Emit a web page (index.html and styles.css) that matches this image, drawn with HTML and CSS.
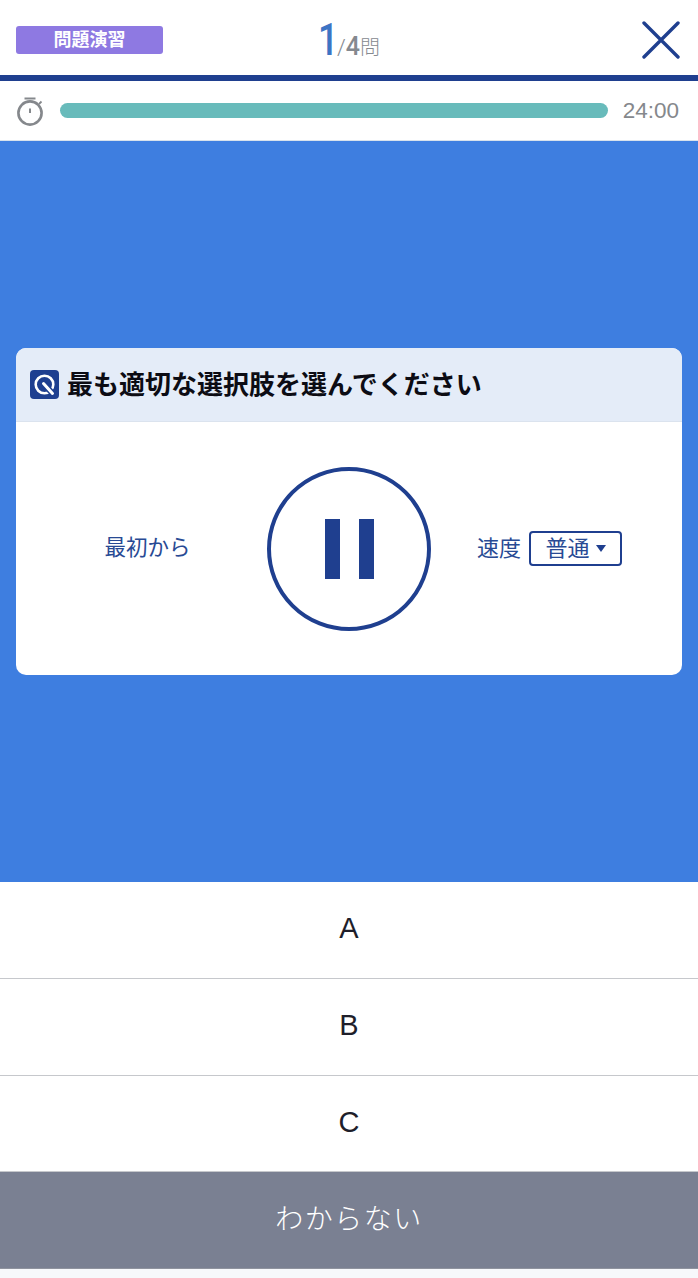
FILE: index.html
```html
<!DOCTYPE html>
<html lang="ja">
<head>
<meta charset="utf-8">
<title>問題演習</title>
<link rel="stylesheet" href="styles.css">
</head>
<body>
<div class="page">
  <header class="top">
    <span class="badge">問題演習</span>
    <div class="count"><span class="count-now">1</span><span class="count-slash">/</span><span class="count-total">4</span><span class="count-unit">問</span></div>
    <button class="close" aria-label="閉じる">
      <svg width="38" height="38" viewBox="0 0 38 38"><path d="M2 2 L36 36 M36 2 L2 36" stroke="#1f3f8f" stroke-width="3.4" stroke-linecap="round" fill="none"/></svg>
    </button>
  </header>
  <div class="timer">
    <svg class="watch" width="28" height="30" viewBox="0 0 28 30"><g fill="none" stroke="#85888c"><circle cx="14" cy="17" r="11.6" stroke-width="2.6"/><path d="M8.5 2.5 H19.5" stroke-width="2"/><path d="M23 8 L25.5 5.5" stroke-width="1.8"/><path d="M14 12.5 V17" stroke-width="2"/></g></svg>
    <div class="bar"></div>
    <span class="time">24:00</span>
  </div>
  <main class="stage">
    <section class="card">
      <div class="card-head">
        <svg class="q-icon" width="29" height="29" viewBox="0 0 29 29"><rect width="29" height="29" rx="4" fill="#1e3f90"/><circle cx="14.5" cy="14.5" r="8.8" fill="none" stroke="#fff" stroke-width="2.6"/><path d="M13 13 L23 24" stroke="#1e3f90" stroke-width="6"/><path d="M13.5 13.5 L22.5 23.5" stroke="#fff" stroke-width="3" stroke-linecap="round"/></svg>
        <h1 class="card-title">最も適切な選択肢を選んでください</h1>
      </div>
      <div class="controls">
        <span class="restart">最初から</span>
        <button class="pause" aria-label="一時停止"><span class="pause-bar"></span><span class="pause-bar"></span></button>
        <div class="speed">
          <span class="speed-label">速度</span>
          <span class="select"><span class="select-text">普通</span><i class="caret"></i></span>
        </div>
      </div>
    </section>
  </main>
  <div class="choices">
    <div class="choice">A</div>
    <div class="choice">B</div>
    <div class="choice">C</div>
  </div>
  <div class="unknown">わからない</div>
  <div class="foot"></div>
</div>
</body>
</html>
```
FILE: styles.css
```css
* { box-sizing: border-box; }
html, body { margin: 0; padding: 0; }
body { font-family: "Liberation Sans", "Noto Sans CJK JP", sans-serif; background: #fff; }
.page { width: 698px; height: 1278px; display: flex; flex-direction: column; overflow: hidden; }

.top { height: 81px; flex: none; border-bottom: 6px solid #1f3f8f; display: grid; grid-template-columns: 1fr auto 1fr; align-items: center; padding: 0 16px; background: #fff; }
.badge { justify-self: start; width: 147px; height: 28px; margin-top: 5px; background: #8e79e2; border-radius: 3px; color: #fff; font-size: 18px; font-weight: 700; line-height: 25px; text-align: center; font-family: "Noto Sans CJK JP", sans-serif; }
.count { display: flex; align-items: baseline; color: #85898f; margin-top: 5px; height: 40px; }
.count-now { display: inline-block; width: 19px; font-family: "Roboto", sans-serif; font-size: 45px; line-height: 40px; font-weight: 500; color: #3d74c4; transform: scaleX(.8); transform-origin: left; }
.count-slash { font-family: "Roboto", sans-serif; font-size: 22px; font-weight: 300; }
.count-total { font-family: "Roboto", sans-serif; font-size: 25px; font-weight: 500; }
.count-unit { font-size: 20px; font-family: "Noto Sans CJK JP", sans-serif; font-weight: 300; }
.close { justify-self: end; background: none; border: 0; padding: 0; margin: 5px 2px 0 0; width: 38px; height: 38px; display: block; }
.close svg { display: block; }

.timer { height: 60px; flex: none; display: flex; align-items: center; padding: 0 19px 0 16px; border-bottom: 1px solid #d9e2ec; background: #fff; }
.watch { flex: none; margin-right: 16px; margin-top: 1px; }
.bar { flex: 1; height: 15px; border-radius: 8px; background: #68bbbb; }
.time { flex: none; margin-left: 15px; font-size: 22.5px; color: #85888c; }

.stage { height: 741px; flex: none; background: #3e7ee0; padding: 207px 16px 0; }
.card { height: 327px; background: #fff; border-radius: 10px; overflow: hidden; }
.card-head { height: 74px; background: #e4ecf8; border-bottom: 1px solid #dbe3ee; display: flex; align-items: center; padding: 0 14px 1px; gap: 8px; }
.q-icon { flex: none; margin-top: 1px; }
.card-title { margin: 0 0 3px; font-size: 26px; line-height: 30px; font-weight: 700; color: #0c0c14; font-family: "Noto Sans CJK JP", sans-serif; }
.controls { height: 253px; display: grid; grid-template-columns: 1fr auto 1fr; align-items: center; }
.restart { justify-self: center; font-size: 21.5px; color: #284a94; font-family: "Noto Sans CJK JP", sans-serif; font-weight: 400; margin-left: 12px; padding-bottom: 6px; }
.pause { width: 164px; height: 164px; border: 4px solid #1f3f8f; border-radius: 50%; background: #fff; padding: 0; display: flex; align-items: center; justify-content: center; gap: 19px; }
.pause-bar { width: 15px; height: 60px; background: #1f3f8f; }
.speed { display: flex; align-items: center; gap: 8px; padding-left: 46px; }
.speed-label { font-size: 22px; color: #284a94; font-family: "Noto Sans CJK JP", sans-serif; font-weight: 400; padding-bottom: 6px; }
.select { width: 93px; height: 35px; border: 2px solid #1f3f8f; border-radius: 4px; display: flex; align-items: center; justify-content: center; gap: 6px; font-size: 22px; color: #284a94; font-family: "Noto Sans CJK JP", sans-serif; font-weight: 400; line-height: 1; }
.select-text { padding-bottom: 5px; }
.caret { width: 0; height: 0; border-left: 5.5px solid transparent; border-right: 5.5px solid transparent; border-top: 7px solid #1f3f8f; }

.choices { flex: none; display: flex; flex-direction: column; }
.choice { height: 97px; border-bottom: 1px solid #c6c8cc; padding-bottom: 4px; display: flex; align-items: center; justify-content: center; font-size: 29px; color: #1e1e2a; background: #fff; }
.choice:last-child { height: 96px; padding-bottom: 2px; }
.unknown { flex: none; height: 97px; padding-bottom: 6px; background: #7a8092; border-bottom: 1px solid #8f939e; color: #fff; font-size: 28px; font-family: "Noto Sans CJK JP", sans-serif; font-weight: 300; letter-spacing: 1.5px; display: flex; align-items: center; justify-content: center; }
.foot { flex: 1; background: #f7f8fb; }
```
